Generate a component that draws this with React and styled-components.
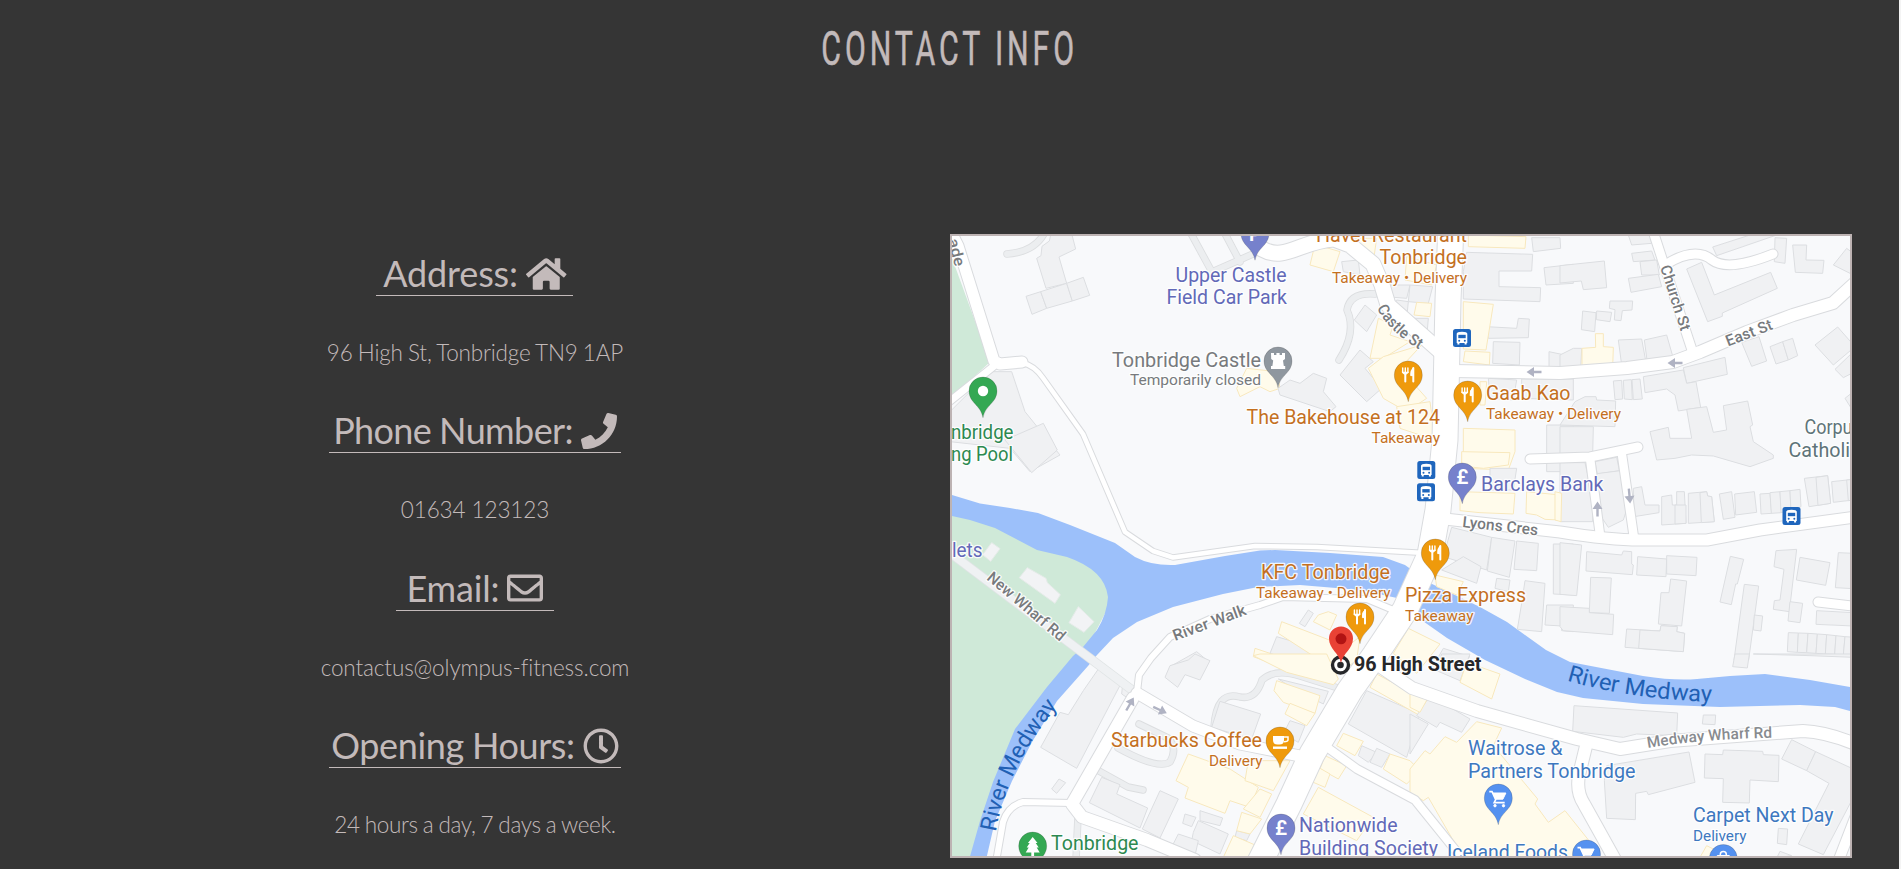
import React from 'react';
import styled, { createGlobalStyle } from 'styled-components';
import { FaHome, FaPhone, FaRegEnvelope, FaRegClock } from 'react-icons/fa';

const GlobalStyle = createGlobalStyle`
  * { box-sizing: border-box; }
  body { margin: 0; background: #f4f4f4; overflow: hidden; }
`;

const Section = styled.section`
  width: 1899px;
  height: 869px;
  background: #353535;
  color: #c3baba;
  font-family: Lato, 'Liberation Sans', sans-serif;
  overflow: hidden;
`;

const Title = styled.h2`
  margin: 0;
  height: 234px;
  padding-top: 19px;
  text-align: center;
  font: 400 49px/60px Roboto, 'Liberation Sans', sans-serif;
  span {
    display: inline-block;
    letter-spacing: 6.3px;
    white-space: nowrap;
    transform: scaleX(0.618);
    -webkit-text-stroke: 0.6px #c3baba;
  }
`;

const Columns = styled.div`
  display: grid;
  grid-template-columns: 950px 902px;
`;

const Details = styled.div`
  display: flex;
  flex-direction: column;
  align-items: center;
  padding-top: 17px;
`;

const Entry = styled.div`
  display: flex;
  flex-direction: column;
  align-items: center;
  height: 157.4px;
`;

const EntryTitle = styled.h3`
  margin: 0;
  width: ${(p) => p.$width}px;
  height: 45px;
  border-bottom: 1px solid #c3baba;
  font-size: 36px;
  line-height: 45px;
  font-weight: 400;
  letter-spacing: ${(p) => p.$tracking}px;
  word-spacing: -0.8px;
  text-align: center;
  white-space: nowrap;
  svg { vertical-align: -4.5px; }
`;

const EntryText = styled.p`
  margin: 41px 0 0;
  font-size: 22.5px;
  line-height: 32px;
  font-weight: 300;
  letter-spacing: ${(p) => p.$tracking}px;
  word-spacing: ${(p) => p.$gap || 0}px;
  white-space: nowrap;
`;

const MapFrame = styled.div`
  width: 902px;
  height: 624px;
  border: 2px solid #bdb3b3;
  background: #f8f9fb;
  overflow: hidden;
`;

const MapSvg = styled.svg`
  display: block;
  font-family: Roboto, 'Liberation Sans', sans-serif;
`;

const Place = styled.text`
  fill: ${(p) => p.$color};
  font-size: ${(p) => p.$size || 19.5}px;
  font-weight: ${(p) => p.$weight || 400};
  stroke: ${(p) => (p.$plain ? 'none' : '#fff')};
  stroke-width: 2.6px;
  stroke-linejoin: round;
  stroke-opacity: 0.85;
  paint-order: stroke;
`;

const entries = [
  { title: 'Address:', Icon: FaHome, icon: 40.5, width: 197, tracking: -0.15, text: '96 High St, Tonbridge TN9 1AP', textTracking: -0.18, gap: -0.7 },
  { title: 'Phone Number:', Icon: FaPhone, icon: 36, width: 292, tracking: -0.6, text: '01634 123123', textTracking: -0.1 },
  { title: 'Email:', Icon: FaRegEnvelope, icon: 36, width: 158, tracking: -0.2, text: 'contactus@olympus-fitness.com', textTracking: -0.12 },
  { title: 'Opening Hours:', Icon: FaRegClock, icon: 36, width: 292, tracking: -0.36, text: '24 hours a day, 7 days a week.', textTracking: -0.34, gap: -0.7 },
];

const ORANGE = '#c4701f';
const INDIGO = '#6269b8';
const GREEN = '#2c8950';
const BLUE = '#3d78c0';
const GREY = '#777a7d';
const TEAL = '#5f7479';

/* text, x, baseline, drawn width, colour, size, weight */
const places = [
  ['Upper Castle', 1175.5, 281.7, 111, INDIGO],
  ['Field Car Park', 1166.5, 304.3, 120.5, INDIGO],
  ['Havet Restaurant', 1316, 241.7, 151, ORANGE],
  ['Tonbridge', 1379.5, 264, 87.5, ORANGE],
  ['Takeaway • Delivery', 1332, 282.7, 135, ORANGE, 15.5],
  ['Tonbridge Castle', 1112, 366.7, 149, GREY],
  ['Temporarily closed', 1130, 385.2, 131, GREY, 15.5],
  ['The Bakehouse at 124', 1246.5, 424.2, 193.5, ORANGE],
  ['Takeaway', 1371.5, 443, 68.5, ORANGE, 15.5],
  ['Gaab Kao', 1486, 400, 84.5, ORANGE],
  ['Takeaway • Delivery', 1486, 419.3, 135, ORANGE, 15.5],
  ['nbridge', 951, 438.7, 62.5, GREEN],
  ['ng Pool', 951, 461, 62, GREEN],
  ['Corpu', 1804.5, 434.3, 48, TEAL],
  ['Catholi', 1788.5, 456.6, 61.5, TEAL],
  ['Barclays Bank', 1481, 490.7, 122.5, INDIGO],
  ['KFC Tonbridge', 1261, 579, 129, ORANGE],
  ['Takeaway • Delivery', 1256, 598, 134.5, ORANGE, 15.5],
  ['Pizza Express', 1405, 601.8, 121, ORANGE],
  ['Takeaway', 1405, 620.6, 68.5, ORANGE, 15.5],
  ['96 High Street', 1354, 671.3, 127.5, '#26272a', 19.5, 700],
  ['lets', 952, 556.8, 30.5, INDIGO],
  ['Waitrose &', 1468, 755, 94.5, BLUE],
  ['Partners Tonbridge', 1468, 777.7, 167.5, BLUE],
  ['Carpet Next Day', 1693, 821.5, 140.5, BLUE],
  ['Delivery', 1693, 840.5, 53.5, BLUE, 15.5],
  ['Iceland Foods', 1447, 858.5, 121, BLUE],
  ['Starbucks Coffee', 1111, 747, 151, ORANGE],
  ['Delivery', 1209, 766.2, 53.5, ORANGE, 15.5],
  ['Nationwide', 1299, 832, 98.5, INDIGO],
  ['Building Society', 1299, 855, 139, INDIGO],
  ['Tonbridge', 1051, 849.5, 87.5, GREEN],
];

/* id, text, baseline path, length, size, colour, weight */
const pathLabels = [
  ['ade', 'ade', 'M948,240 L957,275', 28, 15.5, GREY, 500],
  ['castle', 'Castle St', 'M1377,308 Q1389,333 1424,352', 60, 15.5, GREY, 500],
  ['church', 'Church St', 'M1660,267 L1683,338', 68, 15.5, GREY, 500],
  ['east', 'East St', 'M1728,346.5 L1776,328', 49, 15.5, GREY, 500],
  ['lyons', 'Lyons Cres', 'M1462,527 L1544,536', 76, 15.5, GREY, 500],
  ['newwharf', 'New Wharf Rd', 'M986,579 L1066,647', 97, 15.5, GREY, 500],
  ['riverwalk', 'River Walk', 'M1175,641 L1252,612.5', 77, 15.5, GREY, 500],
  ['medwaywharf', 'Medway Wharf Rd', 'M1648,748 Q1700,739 1780,737.5', 125, 15.5, '#888b8f', 500],
  ['river-w', 'River Medway', 'M996,832 Q1006,768 1060,703', 142, 23, '#2160b4', 400],
  ['river-e', 'River Medway', 'M1567,680.5 Q1632,700 1720,702', 147, 23, '#2160b4', 400],
];

const pins = [
  [983, 391, '#34a853', 'dot'],
  [1255, 233.5, '#7681cc', 'parking'],
  [1278, 361, '#8f979f', 'castle'],
  [1408.3, 375, '#ef9a0c', 'food'],
  [1467.7, 395, '#ef9a0c', 'food'],
  [1462.3, 477, '#7681cc', 'pound'],
  [1435.3, 553, '#ef9a0c', 'food'],
  [1360, 617, '#ef9a0c', 'food'],
  [1280, 741, '#ef9a0c', 'cup'],
  [1281, 828, '#7681cc', 'pound'],
  [1032.7, 846, '#34a853', 'tree'],
  [1498.3, 798, '#5491f0', 'cart'],
  [1586.5, 854, '#5491f0', 'cart'],
  [1723.3, 858.5, '#5491f0', 'bag'],
];

const busStops = [[1462, 338], [1426.3, 470], [1426, 492.3], [1791.5, 516]];

/* path, width */
const roads = [
  ['M1262,249 C1285,262 1300,241 1334,239 L1350,245 L1373,264 L1382,285 L1388,305 L1441,352', 15],
  ['M948,226 L958,246 L994,361 L1000,364 L1022,362', 11],
  ['M994,366 L945,405', 7],
  ['M1022,363 Q1034,365 1043,378 L1083,434 L1125,532 L1153,551 L1173,557.5 L1255,546 L1317,547 L1425,553', 4.5],
  ['M1453,371 L1560,373 L1627,368 L1673,362 L1700,352 L1747,332 L1793,315 L1833,303 L1856,282', 12],
  ['M1652,228 L1668,277 L1692,350', 9],
  ['M1665,265 Q1695,246 1712,260 Q1728,272 1773,254', 9],
  ['M1445,519 L1560,532 Q1610,540 1640,540 L1707,540 L1760,530 L1856,517', 11],
  ['M1530,459 L1590,457 L1638,447', 9],
  ['M1590,458 L1600,535', 8.5],
  ['M1622,455 L1634,538', 8.5],
  ['M1818,602 L1860,607', 9],
  ['M1137,693 L1193,726 L1240,744 L1300,756', 11],
  ['M1133,698 L1072,804 L1082,817 L1147,840 L1195,860', 12],
  ['M1072,803 L1023,802 Q1008,806 1003,822 L996,862', 6],
  ['M1137,692 L1139,675 L1151,658 L1170,637 L1210,619 L1260,605 L1283,597 L1367,599 L1398,612', 6],
  ['M1375,663 L1412,688 L1477,711 L1577,739 L1620,749 L1670,741 L1803,731 Q1828,732 1860,746', 12],
  ['M1587,742 L1579,775 Q1576,792 1584,804 L1618,865', 12],
  ['M1328,748 L1357,769 L1415,800 L1465,862', 8],
  ['M1860,805 L1838,862', 10],
  ['M1451,225 L1448,300 L1445,440 L1438,510 L1430,555 L1405,610 L1375,655 L1350,690 L1312,754 L1289,804 L1258,866', 25],
];

const lanes = [
  'M1375,294 Q1350,292 1347,310 Q1357,332 1339,360',
  'M1007,254 Q1035,252 1045,232',
  'M1139,724 L1168,738 Q1178,748 1170,762 Q1158,770 1118,748',
  'M1099,771 L1128,787 L1143,790',
  'M1214,728 Q1216,690 1240,697 Q1256,700 1262,680 Q1275,668 1300,676 L1338,688',
  'M1078,817 L1076,860',
  'M1188,228 L1212,272 M1222,228 L1240,262 M1212,272 L1262,250',
];

/* Buildings are grouped by map sheet; each sheet is drawn at a third of its own units. */
const sheets = [
  {
    at: [940, 225],
    grey: [
      '332,30 328,48 306,64 303,92 290,100 318,190 380,175 357,96 407,72 396,30',
      '258,214 302,200 320,250 276,268', '302,200 380,175 397,228 320,250', '380,175 430,157 449,211 397,228',
      '150,440 215,440 255,560 360,690 270,740 210,670 30,650 30,560',
    ],
    shop: ['920,430 1010,440 1020,490 990,500 960,485 900,515 890,490'],
  },
  {
    at: [1250, 225],
    grey: [
      '275,110 325,105 330,150 280,140', '410,180 480,180 470,220 408,215', '480,180 548,185 535,235 475,230',
      '345,240 380,270 350,320 313,285', '440,225 475,230 470,280 420,255', '475,280 535,280 530,340 475,310',
      '330,375 370,410 345,430 395,490 350,530 270,450',
      '84,490 120,465 150,475 190,445 230,460 220,500 258,545 240,560 90,510',
      '650,82 848,88 845,138 747,138 747,185 872,188 870,230 640,222 640,140',
      '845,38 930,38 932,70 850,80', '882,128 970,118 970,175 888,180', '710,305 800,310 805,280 838,282 835,338 715,340',
      '730,350 810,352 808,420 728,415', '897,380 935,388 970,390 970,432 897,432', '940,388 970,388 970,432 940,432',
      '815,462 970,462 970,525 815,520', '715,460 800,465 790,525 720,520', '890,600 970,600 970,740 890,740',
    ],
    shop: [
      '195,58 270,80 250,140 180,120', '300,40 380,40 370,110 330,85', '470,95 560,120 545,180 465,165',
      '500,232 545,235 540,275 492,270', '385,280 430,300 420,330 480,350 400,400 360,400',
      '400,395 515,360 450,430 530,520 470,560 400,520 355,430', '640,230 730,238 708,375 640,372', '645,378 720,382 718,420 640,410',
      '655,30 828,35 825,70 655,65', '440,545 540,530 555,645 450,610', '640,610 795,615 795,680 775,735 640,730', '690,470 710,470 705,540 690,540',
    ],
  },
  {
    at: [1560, 225],
    grey: [
      '0,122 133,108 140,188 70,194 64,168 0,174', '205,30 270,30 275,55 215,60', '215,85 275,78 285,105 220,110',
      '240,110 290,105 298,150 245,150', '205,160 295,148 305,185 213,202', '150,228 218,228 216,255 187,257 183,287 163,285 165,254 148,250',
      '68,258 108,263 104,320 64,314', '110,258 155,262 150,290 109,284', '0,390 40,370 65,370 62,430 0,430',
      '175,345 245,342 258,412 185,420', '253,345 320,330 340,400 262,412', '458,66 570,30 650,30 470,92',
      '645,38 680,40 675,115 643,110', '698,60 740,60 738,105 792,106 788,145 706,142',
      '380,132 425,112 463,210 632,142 652,190 487,264 487,274 443,290', '820,120 860,70 880,85 880,150',
      '545,352 597,335 620,408 575,424', '630,365 668,350 685,405 648,417', '668,350 698,340 713,392 685,405',
      '765,360 833,306 885,365 820,420', '825,433 875,385 885,440 850,458', '370,428 495,397 502,448 380,475',
      '250,455 370,435 380,475 408,470 422,547 355,558 345,510 320,492 255,503',
      '160,468 185,466 188,522 165,524', '190,466 214,464 217,524 193,522', '216,464 240,462 247,522 220,524',
      '380,553 440,545 460,622 500,615 490,542 563,528 578,600 570,605 580,650 640,690 640,700 570,725 460,693 395,690 345,700 290,705 270,620 325,607 330,640 395,640',
      '45,530 75,515 108,515 110,525 167,528 165,605 0,600', '0,605 100,605 98,690 0,690', '855,520 880,500 880,560',
    ],
    shop: ['66,370 107,367 106,326 130,326 130,365 160,367 158,430 66,428'],
  },
  {
    at: [940, 440],
    grey: ['195,0 310,-50 352,30 275,98', '690,680 770,635 800,660 740,700'],
    pale: ['262,383 318,415 322,428 361,464 345,490 238,413', '415,500 462,545 432,577 387,548', '155,308 180,326 152,364 128,344'],
  },
  {
    at: [1250, 440],
    grey: [
      '720,85 800,85 790,150 720,150', '605,262 725,292 710,390 580,350', '725,292 795,303 778,412 712,393',
      '800,303 865,310 860,392 792,388', '640,350 693,380 680,430 575,390', '740,415 780,420 775,455 735,445',
      '825,422 885,430 875,575 802,568 815,490', '890,495 970,495 970,575 935,572 935,558 885,555',
      '175,510 190,520 165,560 148,550', '80,590 250,640 250,700 60,640', '580,625 660,650 600,700 560,660',
      '910,312 970,312 970,465 910,462', '935,150 970,150 970,240 935,245',
    ],
    shop: [
      '635,35 780,38 775,75 700,85 635,78', '630,155 795,160 790,222 690,218 630,212', '830,155 930,165 925,240 885,238 860,225 828,220',
      '555,405 640,425 620,465 560,440', '235,515 260,525 240,570 190,545 205,525', '95,545 290,620 330,590 320,660 270,700 85,580',
      '15,625 60,640 50,665 10,650', '475,565 570,612 500,700 430,640',
    ],
  },
  {
    at: [1560, 440],
    grey: [
      '0,68 75,68 100,180 98,245 0,245', '105,65 170,52 178,92 112,102', '102,102 182,92 198,215 190,240 145,262 120,225',
      '0,308 65,315 50,467 0,463', '220,145 245,140 255,195 297,195 297,218 222,230',
      '305,170 335,165 337,195 350,195 350,155 373,155 378,250 305,255', '345,195 378,195 378,250 345,252',
      '385,160 440,155 443,168 455,170 463,245 385,250', '420,158 440,155 443,168 455,170 463,245 424,248',
      '478,162 515,155 525,232 490,238', '524,162 583,155 590,217 527,225', '600,162 630,160 635,220 603,222',
      '630,158 660,155 664,218 634,220', '660,155 690,152 693,215 663,217', '690,152 720,148 723,200 693,215',
      '733,115 803,107 812,190 747,200', '768,112 774,196 812,190 803,107', '815,125 880,118 880,180 820,187', '860,120 880,118 880,180 865,182',
      '80,335 185,345 190,333 215,335 215,372 220,375 217,404 78,393', '233,350 320,357 318,410 230,405', '320,347 411,352 408,407 320,402',
      '92,412 154,414 148,520 88,518', '0,500 88,505 88,518 161,523 158,584 10,572 0,560',
      '332,417 380,423 365,558 295,552 303,458 327,458', '200,567 300,573 303,557 352,560 350,575 374,580 370,635 195,622', '240,570 300,573 303,557 352,560 350,575 374,580 370,635 236,625',
      '511,349 551,358 532,432 527,432 514,494 480,486', '553,433 596,438 566,660 522,660', '583,525 608,528 603,573 580,570',
      '648,332 710,328 688,515 640,508 643,482 660,480 672,388 642,380', '720,352 810,368 797,436 709,420', '690,485 728,490 720,548 684,543',
      '835,338 880,340 880,446 826,443', '770,512 880,518 880,558 768,553',
      '685,578 715,579 712,637 682,635', '715,579 744,580 740,638 712,637', '744,580 772,582 768,640 740,638', '772,582 800,584 796,642 768,640',
      '800,584 828,587 824,643 796,642', '828,587 855,590 850,645 824,643', '855,590 885,592 880,647 850,645',
    ],
    shop: ['-15,155 5,160 3,245 -15,240'],
  },
  {
    at: [940, 654],
    grey: [
      '480,38 550,75 410,343 302,280 360,175 385,182 430,110', '548,90 590,115 575,140 545,120',
      '745,18 765,0 810,20 780,78 735,62 713,100 675,70 690,35', '840,142 962,180 935,255 815,220',
      '1015,75 1165,112 1150,150 1070,110', '1050,200 1095,215 1075,265 1030,240',
      '357,375 377,386 350,418 335,405', '485,370 540,392 530,420 623,462 600,522 448,446', '660,410 715,435 660,552 607,525',
      '735,480 768,490 755,518 728,508', '780,470 848,492 840,515 780,500', '775,500 865,540 840,600 755,560 760,535',
      '715,540 775,560 765,605 692,585', '1280,110 1440,180 1400,310 1225,210', '1265,275 1310,295 1285,325 1255,305', '1310,283 1350,300 1325,340 1290,325',
      '890,530 930,540 920,560 885,550',
    ],
    shop: [
      '940,5 960,0 1160,0 1195,75 1180,92 1040,55', '1010,80 1140,125 1125,178 1030,145 1002,110', '1050,148 1125,178 1100,215 1035,180',
      '745,300 870,345 955,400 930,460 870,440 855,478 735,432 745,400 708,380', '925,320 1050,320 1000,410 915,380',
      '960,405 995,420 960,490 910,465', '905,475 965,495 930,540 890,530', '880,545 950,575 930,610 850,610',
      '1310,60 1440,130 1440,185 1290,100', '1210,238 1270,262 1245,305 1190,275', '1350,300 1410,320 1440,350 1400,390 1330,345',
      '1155,305 1220,335 1195,375 1140,345', '1135,340 1170,360 1155,400 1113,382', '1135,400 1300,490 1250,560 1090,480',
    ],
  },
  {
    at: [1410, 654],
    grey: [
      '95,0 180,0 150,80 80,50', '60,125 180,195 155,235 90,205 80,220 20,185', '0,180 55,210 0,300',
      '492,155 803,177 800,245 680,240 640,250 488,232', '880,183 917,183 915,212 877,210', '975,0 1018,0 1012,42 968,38',
      '590,335 837,294 855,385 715,422 710,412 677,418 676,497 590,493 583,380',
      '885,300 938,302 940,288 1058,292 1060,302 1107,304 1105,383 1020,378 1018,447 938,445 940,374 883,372',
      '1145,257 1217,293 1190,350 1115,315', '1217,293 1330,345 1330,430 1240,602 1165,570 1257,388 1190,350',
      '1105,523 1133,525 1130,572 1102,568', '1110,592 1145,605 1100,612', '1030,0 1330,0 1330,10 1200,5',
    ],
    shop: [
      '170,25 270,60 245,135 150,85', '0,105 55,130 30,175 0,160',
      '0,345 45,290 60,300 105,248 140,265 200,203 275,222 250,275 383,435 375,450 415,505 465,470 545,570 480,640 165,640 130,560 55,430 40,440 0,415',
      '890,575 920,590 900,612 870,610',
    ],
  },
];

const Glyph = ({ kind }) => {
  switch (kind) {
    case 'dot':
      return <circle r="5.2" fill="#fff" />;
    case 'food':
      return (
        <g fill="none" stroke="#fff" strokeLinecap="round">
          <path d="M-5.6,-7 V-2.5 M-3,-7 V-2.5 M-0.4,-7 V-2.5" strokeWidth="1.4" />
          <path d="M-5.6,-2.6 Q-3,1 -0.4,-2.6 Z" fill="#fff" strokeWidth="1.2" />
          <path d="M-3,-1 V6.5" strokeWidth="2" />
          <path d="M5,-7 V6.5" strokeWidth="2" />
          <path d="M4.6,-6.8 Q2,-5 2.4,0.6 H4.6 Z" fill="#fff" strokeWidth="1" />
        </g>
      );
    case 'pound':
      return <text fill="#fff" fontSize="20.5" fontWeight="600" textAnchor="middle" y="7.3">£</text>;
    case 'parking':
      return <text fill="#fff" fontSize="19" fontWeight="700" textAnchor="middle" y="7">P</text>;
    case 'castle':
      return <path fill="#fff" d="M-7,-8 h3 v2 h2.4 v-2 h3.2 v2 h2.4 v-2 h3 v6 l-2,1.5 l0.8,5.5 h1.4 v3 H-7 v-3 h1.4 l0.8,-5.5 l-2,-1.5 Z" />;
    case 'cup':
      return (
        <g fill="#fff">
          <path d="M-7,-5 H4 V-1 Q4,3.5 -0.5,3.5 H-2.5 Q-7,3.5 -7,-1 Z" />
          <path d="M4,-4 h4 v3 q0,1.6 -4,1.8" fill="none" stroke="#fff" strokeWidth="1.5" />
          <rect x="-7" y="5.5" width="14" height="2.4" />
        </g>
      );
    case 'cart':
      return (
        <g fill="none" stroke="#fff">
          <path d="M-9,-6.4 H-6.3 L-2.6,1.6 L-4.2,4.6 H6.4" strokeWidth="1.6" />
          <path d="M-5.5,-5 H7.6 L4.6,1.2 H-2.6 Z" fill="#fff" strokeWidth="1" />
          <circle cx="-3.3" cy="7.7" r="1.2" fill="#fff" strokeWidth="1" />
          <circle cx="5.2" cy="7.7" r="1.2" fill="#fff" strokeWidth="1" />
        </g>
      );
    case 'tree':
      return <path fill="#fff" d="M0,-9 L4.8,-3 H3 L6,1.5 H4 L7,6.5 H1.4 V10 H-1.4 V6.5 H-7 L-4,1.5 H-6 L-3,-3 H-4.8 Z" />;
    default:
      return (
        <g fill="none" stroke="#fff">
          <path d="M-3,-1 V-4 Q-3,-7 0,-7 Q3,-7 3,-4 V-1" strokeWidth="1.5" />
          <path d="M-6,-3 H6 V7 H-6 Z" fill="#fff" />
        </g>
      );
  }
};

const Pin = ({ x, y, color, kind }) => (
  <g transform={`translate(${x},${y})`}>
    <path d="M0,26.7 C-2,14 -14,12 -14,0 A14,14 0 0 1 14,0 C14,12 2,14 0,26.7 Z" fill={color} stroke="rgba(70,70,70,.28)" strokeWidth="0.8" />
    <Glyph kind={kind} />
  </g>
);

const BusStop = ({ x, y }) => (
  <g transform={`translate(${x},${y})`}>
    <rect x="-9" y="-9" width="18" height="18" rx="2.5" fill="#1f66bd" />
    <path d="M-5.3,5 V-4.2 Q-5.3,-6.2 0,-6.2 Q5.3,-6.2 5.3,-4.2 V5 H4.6 V6.6 H2.6 V5 H-2.6 V6.6 H-4.6 V5 Z" fill="#fff" />
    <path d="M-3.7,-3.2 H3.7 V0.2 H-3.7 Z" fill="#1f66bd" />
    <circle cx="-2.8" cy="2.8" r="1" fill="#1f66bd" />
    <circle cx="2.8" cy="2.8" r="1" fill="#1f66bd" />
  </g>
);

const Arrow = ({ x, y, turn }) => (
  <path transform={`translate(${x},${y}) rotate(${turn})`} d="M-7.5,-1.2 H0 V-5 L7.5,0 L0,5 V1.2 H-7.5 Z" fill="#b0b3c3" />
);

const StreetMap = () => (
  <MapSvg width="898" height="620" viewBox="952 236 898 620">
    <rect x="952" y="236" width="898" height="620" fill="#f8f9fb" />
    <g fill="#cfe9d8">
      <path d="M952,258 L990,362 L952,397 Z" />
      <path d="M952,514 L1095,550 L1112,600 L1083,656 L1020,750 L980,860 H952 Z" />
    </g>
    <path
      fill="#9cc0fa"
      d="M952,495 L980,503.5 L1010,508 L1038,513 L1070,525 L1115,543 L1135,557 Q1152,566 1175,565 L1225,556 L1260,550.5 L1275,550 L1330,553 L1383,557
         L1405,565 L1430,583 L1480,607 L1507,622 L1546,650 L1570,662 L1643,676 Q1675,681 1697,679 L1730,676 L1765,674 L1810,680 L1850,687
         V711 L1835,707 L1800,705 L1720,707 L1643,704 L1583,698 L1557,692 L1525,679 L1485,660 L1447,638 L1420,619 L1397,598 L1360,590 L1300,585
         L1258,587 L1223,594 L1173,607 L1137,622 L1113,638 L1097,655 L1088,666 L1057,701 L1032,742 L1012,781 L995,821 L986,860 H969
         L980,821 L993,782 L1015,729 L1047,687 L1073,656 L1083,647 L1097,630 Q1107,614 1108,597 Q1105,570 1067,557 L1037,550 L995,528 L970,520 L952,516 Z"
    />
    <g fill="none" strokeLinecap="round" strokeLinejoin="round">
      {lanes.map((d) => <path key={d} d={d} stroke="#dcdee0" strokeWidth="7.5" />)}
      {lanes.map((d) => <path key={d} d={d} stroke="#eceef0" strokeWidth="5.8" />)}
    </g>
    {sheets.map(({ at, grey, shop = [], pale = [] }) => (
      <g key={at.join()} transform={`translate(${at[0]},${at[1]}) scale(0.33333)`} strokeWidth="3" strokeLinejoin="round">
        {grey.map((p) => <polygon key={p} points={p} fill="#f0f1f3" stroke="#dcdee1" />)}
        {shop.map((p) => <polygon key={p} points={p} fill="#fffbeb" stroke="#f8e8bd" />)}
        {pale.map((p) => <polygon key={p} points={p} fill="#f2f3f5" stroke="#e6ebe9" />)}
      </g>
    ))}
    <g fill="none" strokeLinejoin="round">
      <path d="M945,549 L1140,696" stroke="#dfe3e4" strokeWidth="9.5" />
      <path d="M945,549 L1140,696" stroke="#eff1f3" strokeWidth="8" />
      {roads.map(([d, w]) => <path key={d} d={d} stroke="#d9dbde" strokeWidth={w + 2} strokeLinecap="round" />)}
      {roads.map(([d, w]) => <path key={d} d={d} stroke="#fff" strokeWidth={w} strokeLinecap="round" />)}
    </g>
    <Arrow x={1534} y={372} turn={180} />
    <Arrow x={1675} y={363} turn={180} />
    <Arrow x={1597.5} y={509} turn={-90} />
    <Arrow x={1629.5} y={496} turn={85} />
    <Arrow x={1130} y={704} turn={-60} />
    <Arrow x={1160} y={710} turn={25} />
    {pathLabels.map(([id, text, d, len, size, color, weight]) => (
      <React.Fragment key={id}>
        <path id={id} d={d} fill="none" />
        <Place $color={color} $size={size} $weight={weight} $plain={id.startsWith('river-')}>
          <textPath href={`#${id}`} textLength={len} lengthAdjust="spacingAndGlyphs">{text}</textPath>
        </Place>
      </React.Fragment>
    ))}
    {busStops.map(([x, y]) => <BusStop key={`${x},${y}`} x={x} y={y} />)}
    {pins.map(([x, y, color, kind]) => <Pin key={`${x},${y}`} x={x} y={y} color={color} kind={kind} />)}
    {places.map(([text, x, y, len, color, size, weight]) => (
      <Place key={`${x},${y}`} x={x} y={y} textLength={len} lengthAdjust="spacingAndGlyphs" $color={color} $size={size} $weight={weight}>
        {text}
      </Place>
    ))}
    <circle cx="1340.5" cy="665" r="8" fill="#fff" stroke="#26272a" strokeWidth="3.4" />
    <circle cx="1340.5" cy="665" r="3.3" fill="#26272a" />
    <path d="M1341,663 C1339,653 1329,649 1329,638.5 A12,12 0 0 1 1353,638.5 C1353,649 1343,653 1341,663 Z" fill="#e94235" />
    <circle cx="1341" cy="638.8" r="5.5" fill="#b11313" />
  </MapSvg>
);

export default function App() {
  return (
    <>
      <GlobalStyle />
      <Section>
        <Title><span>CONTACT INFO</span></Title>
        <Columns>
          <Details>
            {entries.map(({ title, Icon, icon, width, tracking, text, textTracking, gap }) => (
              <Entry key={title}>
                <EntryTitle $width={width} $tracking={tracking}>
                  {title} <Icon style={{ width: icon, height: 36 }} />
                </EntryTitle>
                <EntryText $tracking={textTracking} $gap={gap}>{text}</EntryText>
              </Entry>
            ))}
          </Details>
          <MapFrame><StreetMap /></MapFrame>
        </Columns>
      </Section>
    </>
  );
}
